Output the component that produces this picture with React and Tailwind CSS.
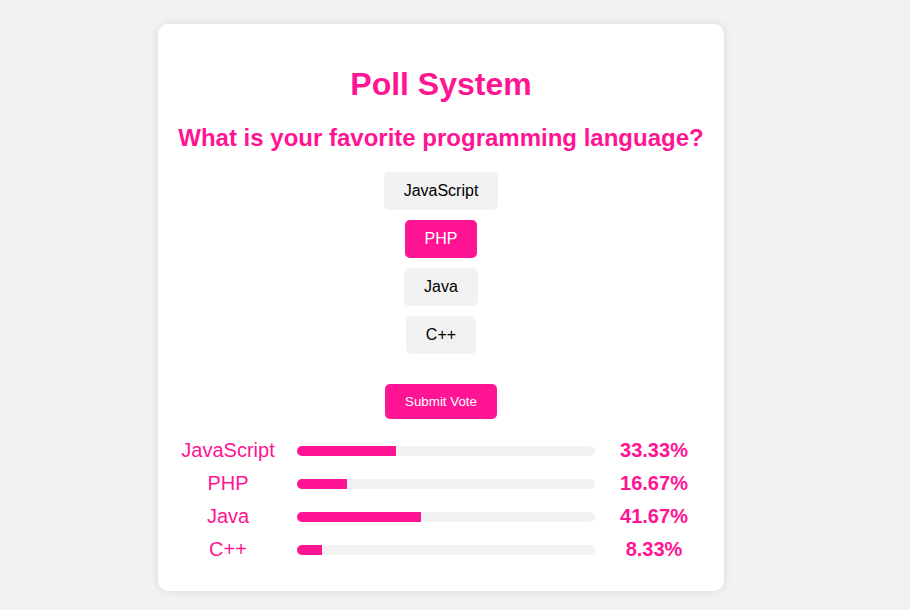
import React from "react";

const options = ["JavaScript", "PHP", "Java", "C++"];
const results = [
  { label: "JavaScript", pct: 33.33 },
  { label: "PHP", pct: 16.67 },
  { label: "Java", pct: 41.67 },
  { label: "C++", pct: 8.33 },
];

export default function App() {
  return (
    <div
      className="min-h-[610px] bg-[#f2f2f2] flex justify-start pl-[158px] pt-[24px]"
      style={{ fontFamily: '"Liberation Sans", Arial, sans-serif' }}
    >
      <div className="w-[566px] h-[567px] bg-white rounded-[10px] shadow-[0_0_10px_rgba(0,0,0,0.1)] p-[20px] flex flex-col items-center">
        <h1 className="text-[32px] leading-[37px] font-bold text-[#ff1493] mt-[22px]">Poll System</h1>
        <h2 className="text-[24px] leading-[28px] font-bold text-[#ff1493] mt-[21px]">
          What is your favorite programming language?
        </h2>
        <div className="flex flex-col items-center gap-[10px] mt-[20px]">
          {options.map((o) => (
            <button
              key={o}
              className={
                o === "PHP"
                  ? "px-[20px] py-[10px] text-[16px] leading-[18px] rounded-[5px] bg-[#ff1493] text-white"
                  : "px-[20px] py-[10px] text-[16px] leading-[18px] rounded-[5px] bg-[#f2f2f2] text-black"
              }
            >
              {o}
            </button>
          ))}
        </div>
        <button className="mt-[30px] px-[20px] py-[10px] text-[13.33px] leading-[15px] rounded-[5px] bg-[#ff1493] text-white">
          Submit Vote
        </button>
        <div className="w-full mt-[20px] flex flex-col gap-[10px]">
          {results.map((r) => (
            <div key={r.label} className="flex items-center h-[23px]">
              <div className="w-[100px] text-center text-[20px] leading-[23px] text-[#ff1493]">{r.label}</div>
              <div className="ml-[19px] w-[298px] h-[10px] rounded-[5px] bg-[#f2f2f2] overflow-hidden">
                <div className="h-full bg-[#ff1493]" style={{ width: `${r.pct}%` }} />
              </div>
              <div className="ml-[9px] w-[100px] text-center text-[20px] leading-[23px] font-bold text-[#ff1493]">
                {r.pct.toFixed(2)}%
              </div>
            </div>
          ))}
        </div>
      </div>
    </div>
  );
}
